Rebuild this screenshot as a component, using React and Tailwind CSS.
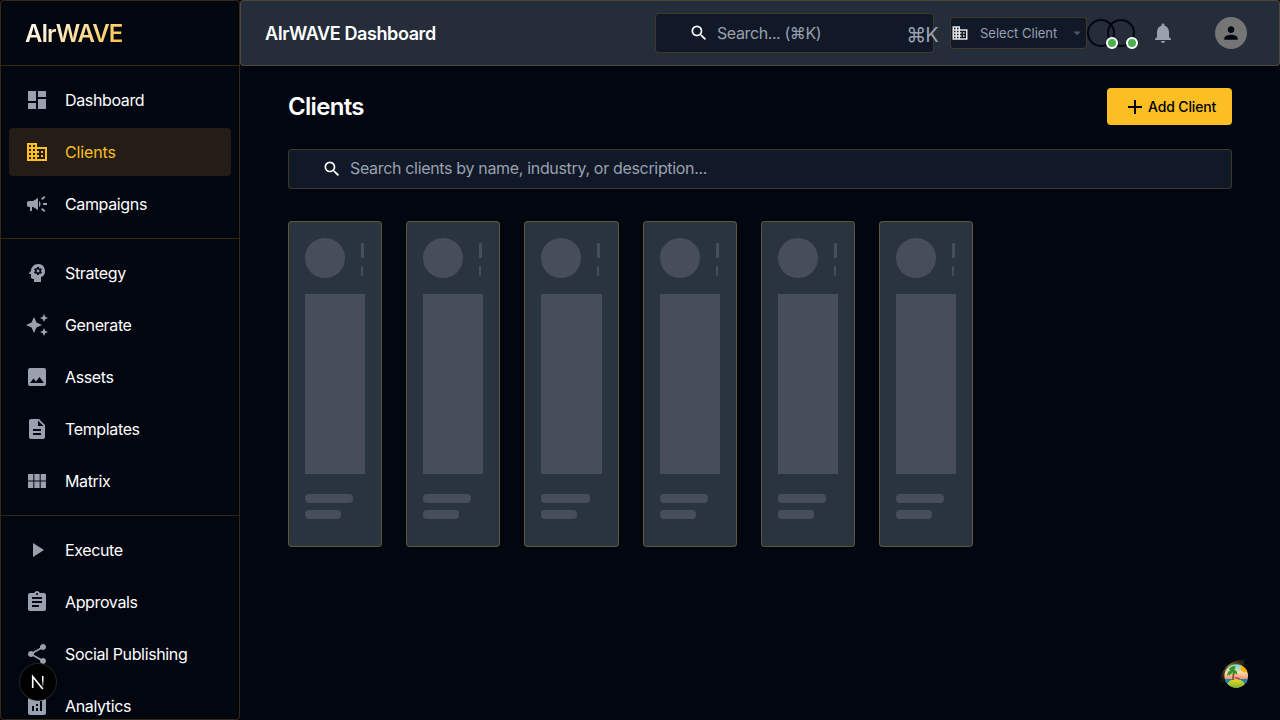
import React from "react";
import {
  MdDashboard,
  MdBusiness,
  MdCampaign,
  MdPsychology,
  MdAutoAwesome,
  MdImage,
  MdDescription,
  MdViewModule,
  MdPlayArrow,
  MdAssignment,
  MdShare,
  MdAnalytics,
  MdSearch,
  MdNotifications,
  MdPerson,
  MdAdd,
  MdArrowDropDown,
} from "react-icons/md";

const GROUPS = [
  [
    { label: "Dashboard", Icon: MdDashboard },
    { label: "Clients", Icon: MdBusiness, active: true },
    { label: "Campaigns", Icon: MdCampaign },
  ],
  [
    { label: "Strategy", Icon: MdPsychology },
    { label: "Generate", Icon: MdAutoAwesome },
    { label: "Assets", Icon: MdImage },
    { label: "Templates", Icon: MdDescription },
    { label: "Matrix", Icon: MdViewModule },
  ],
  [
    { label: "Execute", Icon: MdPlayArrow },
    { label: "Approvals", Icon: MdAssignment },
    { label: "Social Publishing", Icon: MdShare },
    { label: "Analytics", Icon: MdAnalytics },
  ],
];

function NavItem({ label, Icon, active }) {
  return (
    <li
      className={`mx-2 flex h-12 shrink-0 items-center rounded px-4 ${
        active
          ? "bg-[#231d16] tracking-[-0.12px] text-[#fbbf24]"
          : "tracking-[-0.36px] text-white"
      }`}
    >
      <Icon className={`mr-4 size-6 ${active ? "text-[#fbbf24]" : "text-gray-400"}`} />
      <span className="text-base">{label}</span>
    </li>
  );
}

function Sidebar() {
  return (
    <aside className="h-full w-60 shrink-0 overflow-hidden rounded border border-[#fbbf24]/20">
      <div className="flex h-[65px] items-center border-b border-[#fbbf24]/20 px-6 pt-0.5">
        <span className="bg-linear-135 from-white to-[#fbbf24] bg-clip-text text-2xl font-semibold tracking-[-1px] text-transparent">
          AIrWAVE
        </span>
      </div>
      {GROUPS.map((items, i) => (
        <ul
          key={i}
          className={`flex flex-col gap-1 py-2.5 ${i > 0 ? "border-t border-[#fbbf24]/20" : ""}`}
        >
          {items.map((item) => (
            <NavItem key={item.label} {...item} />
          ))}
        </ul>
      ))}
    </aside>
  );
}

function Presence() {
  return <div className="size-7 rounded-full border-2 border-[#030712]" />;
}

function Header() {
  return (
    <header className="flex h-[66px] items-center rounded border border-[#fbbf24]/20 bg-[#252c3a] pr-8 pl-6">
      <h1 className="flex-1 pt-px text-lg font-semibold tracking-[-0.4px]">AIrWAVE Dashboard</h1>
      <div className="mr-4 flex h-10 w-[279px] items-center rounded border border-[#fbbf24]/20 bg-[#111827] text-gray-400">
        <MdSearch className="ml-[33px] size-5 shrink-0 text-white" />
        <span className="ml-2 flex-1 text-base tracking-[-0.4px] whitespace-nowrap">Search... (⌘K)</span>
        <span className="-mr-[5px] pt-1 text-xl tracking-[-0.8px]">⌘K</span>
      </div>
      <div className="flex h-8 w-[137px] items-center rounded border border-[#fbbf24]/20 bg-[#111827] text-gray-400">
        <MdBusiness className="size-[18px] shrink-0 text-gray-200" />
        <span className="ml-[11px] flex-1 pt-px text-[13px] whitespace-nowrap">Select Client</span>
        <MdArrowDropDown className="size-[18px] text-gray-600" />
      </div>
      <div className="relative">
        <div className="flex -space-x-2">
          <Presence />
          <Presence />
        </div>
        <span className="absolute top-[18px] left-[19px] size-3 rounded-full border-2 border-white bg-[#4caf50]" />
        <span className="absolute top-[18px] left-[39px] size-3 rounded-full border-2 border-white bg-[#4caf50]" />
      </div>
      <MdNotifications className="ml-4 size-6 text-gray-400" />
      <div className="ml-10 flex size-8 items-center justify-center rounded-full bg-[#757575]">
        <MdPerson className="size-5 text-[#030712]" />
      </div>
    </header>
  );
}

function SkeletonCard() {
  return (
    <div className="h-[326px] w-[94.2px] rounded border border-[#fbbf24]/25 bg-[#2a343f] p-4">
      <div className="flex h-10 items-center">
        <div className="size-10 shrink-0 rounded-full bg-[#474e59]" />
        <div className="ml-4 flex flex-col items-start gap-2 pt-0.5">
          <div className="h-[15px] w-[3px] rounded-[1px] bg-[#474e59]" />
          <div className="h-[10px] w-[2px] rounded-[1px] bg-[#474e59]" />
        </div>
      </div>
      <div className="mt-4 h-[180px] bg-[#474e59]" />
      <div className="mt-5 h-[9px] w-4/5 rounded bg-[#474e59]" />
      <div className="mt-[7px] h-[9px] w-3/5 rounded bg-[#474e59]" />
    </div>
  );
}

function IslandLogo() {
  return (
    <svg viewBox="0 0 40 40" className="size-10">
      <defs>
        <linearGradient id="sky" x1="0" y1="0" x2="0" y2="1">
          <stop offset="0" stopColor="#6bdacf" />
          <stop offset="0.35" stopColor="#f3dfad" />
          <stop offset="0.65" stopColor="#ff8a66" />
        </linearGradient>
        <linearGradient id="sand" x1="0" y1="0" x2="0" y2="1">
          <stop offset="0" stopColor="#e2dc28" />
          <stop offset="1" stopColor="#52982c" />
        </linearGradient>
        <linearGradient id="rim" x1="0" y1="1" x2="1" y2="0">
          <stop offset="0" stopColor="#4a3512" stopOpacity="0" />
          <stop offset="0.55" stopColor="#9a762c" />
          <stop offset="1" stopColor="#6b4e1c" stopOpacity="0.1" />
        </linearGradient>
        <clipPath id="disc">
          <circle cx="20.2" cy="20" r="11.8" />
        </clipPath>
      </defs>
      <path d="M4 28C4 14 13 4 29 3.5L28 9C17 8 9 14 8 26Z" fill="url(#rim)" />
      <g clipPath="url(#disc)">
        <rect x="8" y="8" width="25" height="24" fill="url(#sky)" />
        <circle cx="29" cy="12" r="4.5" fill="#ffb000" />
        <rect x="8" y="23" width="25" height="9" fill="#1689b4" />
        <ellipse cx="20" cy="30" rx="9" ry="7" fill="url(#sand)" />
        <path d="M17 24L17.5 16" stroke="#794526" strokeWidth="1.5" />
        <path d="M19 21.5L24 23" stroke="#d73672" strokeWidth="1.7" />
        <path
          d="M17 15C13 13 11 17 11 20L13 18L13 20L17 16L18 20L19 17L21 19C22 16 20 14 18 14C20 12 20 11 18 10C15 11 14 11 13 14Z"
          fill="#36932d"
        />
      </g>
    </svg>
  );
}

export default function App() {
  return (
    <div className="relative flex h-[720px] w-[1280px] overflow-hidden bg-[#020610] font-[Inter,sans-serif] text-white">
      <Sidebar />
      <div className="flex min-w-0 flex-1 flex-col">
        <Header />
        <main className="flex-1 px-12 pt-[22px]">
          <div className="flex h-[37px] items-center justify-between">
            <h2 className="pt-px text-2xl font-semibold tracking-[-0.67px]">Clients</h2>
            <button className="flex h-[37px] w-[125px] items-center rounded bg-[#fbbf24] pl-4 text-sm font-medium tracking-[-0.15px] whitespace-nowrap text-black">
              <MdAdd className="mr-px size-6" />
              Add Client
            </button>
          </div>
          <div className="mt-6 flex h-10 items-center rounded border border-[#fbbf24]/20 bg-[#111827] text-gray-400">
            <MdSearch className="ml-[33px] size-5 text-white" />
            <span className="ml-2 pb-0.5 text-base tracking-[-0.33px]">
              Search clients by name, industry, or description...
            </span>
          </div>
          <div className="mt-8 flex gap-6">
            {[0, 1, 2, 3, 4, 5].map((n) => (
              <SkeletonCard key={n} />
            ))}
          </div>
        </main>
      </div>
      <div className="absolute top-[664px] left-5 flex size-9 items-center justify-center rounded-full bg-black ring-1 ring-[#252525]">
        <svg viewBox="0 0 36 36" className="size-9" fill="none">
          <defs>
            <linearGradient id="stem" x1="0" y1="12" x2="0" y2="24" gradientUnits="userSpaceOnUse">
              <stop offset="0.3" stopColor="#fff" />
              <stop offset="1" stopColor="#fff" stopOpacity="0" />
            </linearGradient>
          </defs>
          <path d="M12.7 24V12.5L22.8 25" stroke="#fff" strokeWidth="1.6" />
          <path d="M22 12h1.5v11H22z" fill="url(#stem)" />
        </svg>
      </div>
      <div className="absolute top-[656px] left-[1216px]">
        <IslandLogo />
      </div>
    </div>
  );
}
